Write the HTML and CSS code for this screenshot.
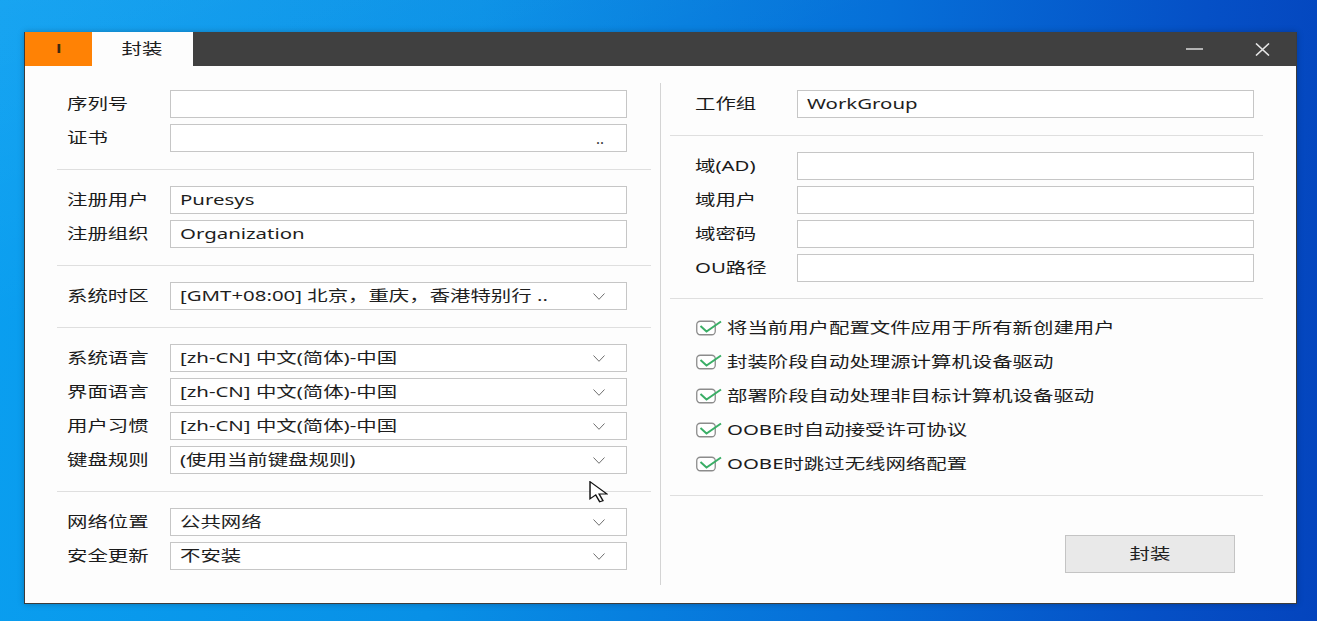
FILE: index.html
```html
<!DOCTYPE html>
<html lang="zh-CN">
<head>
<meta charset="utf-8">
<title>封装</title>
<link rel="stylesheet" href="styles.css">
</head>
<body>
<div class="desk">
  <div class="win">
    <div class="titlebar">
      <div class="tab tab-app"><span class="t tc app-mark">I</span></div>
      <div class="tab tab-active"><span class="t tc">封装</span></div>
      <div class="tb-fill"></div>
      <div class="ctl"><svg width="17" height="4" viewBox="0 0 17 4"><line x1="0" y1="2" x2="17" y2="2" stroke="#e6e6e6" stroke-width="1.4"/></svg></div>
      <div class="ctl"><svg width="15" height="13" viewBox="0 0 15 13"><path d="M1 0.5 L14 12.5 M14 0.5 L1 12.5" stroke="#e6e6e6" stroke-width="1.6" fill="none"/></svg></div>
    </div>
    <div class="content">
      <div class="col col-left">
        <div class="sec sec-first">
          <div class="row"><span class="lbl"><span class="t">序列号</span></span><div class="field"></div></div>
          <div class="row"><span class="lbl"><span class="t">证书</span></span><div class="field field-browse"><span class="dots">..</span></div></div>
        </div>
        <div class="sec">
          <div class="row"><span class="lbl"><span class="t">注册用户</span></span><div class="field"><span class="t">Puresys</span></div></div>
          <div class="row"><span class="lbl"><span class="t">注册组织</span></span><div class="field"><span class="t">Organization</span></div></div>
        </div>
        <div class="sec">
          <div class="row"><span class="lbl"><span class="t">系统时区</span></span><div class="field select"><span class="t">[GMT+08:00] 北京，重庆，香港特别行 ..</span><svg class="chev" width="12" height="7" viewBox="0 0 12 7"><path d="M0.5 0.5 L6 6.3 L11.5 0.5" fill="none" stroke="#6e6e6e" stroke-width="1"/></svg></div></div>
        </div>
        <div class="sec">
          <div class="row"><span class="lbl"><span class="t">系统语言</span></span><div class="field select"><span class="t">[zh-CN] 中文(简体)-中国</span><svg class="chev" width="12" height="7" viewBox="0 0 12 7"><path d="M0.5 0.5 L6 6.3 L11.5 0.5" fill="none" stroke="#6e6e6e" stroke-width="1"/></svg></div></div>
          <div class="row"><span class="lbl"><span class="t">界面语言</span></span><div class="field select"><span class="t">[zh-CN] 中文(简体)-中国</span><svg class="chev" width="12" height="7" viewBox="0 0 12 7"><path d="M0.5 0.5 L6 6.3 L11.5 0.5" fill="none" stroke="#6e6e6e" stroke-width="1"/></svg></div></div>
          <div class="row"><span class="lbl"><span class="t">用户习惯</span></span><div class="field select"><span class="t">[zh-CN] 中文(简体)-中国</span><svg class="chev" width="12" height="7" viewBox="0 0 12 7"><path d="M0.5 0.5 L6 6.3 L11.5 0.5" fill="none" stroke="#6e6e6e" stroke-width="1"/></svg></div></div>
          <div class="row"><span class="lbl"><span class="t">键盘规则</span></span><div class="field select"><span class="t">(使用当前键盘规则)</span><svg class="chev" width="12" height="7" viewBox="0 0 12 7"><path d="M0.5 0.5 L6 6.3 L11.5 0.5" fill="none" stroke="#6e6e6e" stroke-width="1"/></svg></div></div>
        </div>
        <div class="sec sec-last">
          <div class="row"><span class="lbl"><span class="t">网络位置</span></span><div class="field select"><span class="t">公共网络</span><svg class="chev" width="12" height="7" viewBox="0 0 12 7"><path d="M0.5 0.5 L6 6.3 L11.5 0.5" fill="none" stroke="#6e6e6e" stroke-width="1"/></svg></div></div>
          <div class="row"><span class="lbl"><span class="t">安全更新</span></span><div class="field select"><span class="t">不安装</span><svg class="chev" width="12" height="7" viewBox="0 0 12 7"><path d="M0.5 0.5 L6 6.3 L11.5 0.5" fill="none" stroke="#6e6e6e" stroke-width="1"/></svg></div></div>
        </div>
      </div>
      <div class="vdiv"></div>
      <div class="col col-right">
        <div class="sec sec-first">
          <div class="row"><span class="lbl"><span class="t">工作组</span></span><div class="field"><span class="t">WorkGroup</span></div></div>
        </div>
        <div class="sec sec-domain">
          <div class="row"><span class="lbl"><span class="t">域(AD)</span></span><div class="field"></div></div>
          <div class="row"><span class="lbl"><span class="t">域用户</span></span><div class="field"></div></div>
          <div class="row"><span class="lbl"><span class="t">域密码</span></span><div class="field"></div></div>
          <div class="row"><span class="lbl"><span class="t">OU路径</span></span><div class="field"></div></div>
        </div>
        <div class="sec sec-checks">
          <div class="check"><svg width="26" height="16" viewBox="0 0 26 16"><rect x="0.75" y="1.25" width="18.5" height="13.5" rx="3.5" fill="#fff" stroke="#8c8c8c" stroke-width="1.3"/><polyline points="4.5,6 10.5,11.5 25,1.5" fill="none" stroke="#3aae66" stroke-width="2"/></svg><span class="t">将当前用户配置文件应用于所有新创建用户</span></div>
          <div class="check"><svg width="26" height="16" viewBox="0 0 26 16"><rect x="0.75" y="1.25" width="18.5" height="13.5" rx="3.5" fill="#fff" stroke="#8c8c8c" stroke-width="1.3"/><polyline points="4.5,6 10.5,11.5 25,1.5" fill="none" stroke="#3aae66" stroke-width="2"/></svg><span class="t">封装阶段自动处理源计算机设备驱动</span></div>
          <div class="check"><svg width="26" height="16" viewBox="0 0 26 16"><rect x="0.75" y="1.25" width="18.5" height="13.5" rx="3.5" fill="#fff" stroke="#8c8c8c" stroke-width="1.3"/><polyline points="4.5,6 10.5,11.5 25,1.5" fill="none" stroke="#3aae66" stroke-width="2"/></svg><span class="t">部署阶段自动处理非目标计算机设备驱动</span></div>
          <div class="check"><svg width="26" height="16" viewBox="0 0 26 16"><rect x="0.75" y="1.25" width="18.5" height="13.5" rx="3.5" fill="#fff" stroke="#8c8c8c" stroke-width="1.3"/><polyline points="4.5,6 10.5,11.5 25,1.5" fill="none" stroke="#3aae66" stroke-width="2"/></svg><span class="t">OOBE时自动接受许可协议</span></div>
          <div class="check"><svg width="26" height="16" viewBox="0 0 26 16"><rect x="0.75" y="1.25" width="18.5" height="13.5" rx="3.5" fill="#fff" stroke="#8c8c8c" stroke-width="1.3"/><polyline points="4.5,6 10.5,11.5 25,1.5" fill="none" stroke="#3aae66" stroke-width="2"/></svg><span class="t">OOBE时跳过无线网络配置</span></div>
        </div>
        <div class="sec sec-action">
          <button class="btn" type="button"><span class="t tc">封装</span></button>
        </div>
      </div>
    </div>
  </div>
  <svg class="cursor" width="19" height="22" viewBox="0 0 13 21" preserveAspectRatio="none"><path d="M0.7 0.7 L0.7 17 L4.6 13.3 L7.3 19.8 L9.6 18.8 L6.9 12.4 L12.2 12.4 Z" fill="#fff" stroke="#111" stroke-width="1" stroke-linejoin="miter"/></svg>
</div>
</body>
</html>
```

FILE: styles.css
```css
* { box-sizing: border-box; }

html, body {
  margin: 0;
  padding: 0;
}

body {
  width: 1317px;
  height: 621px;
  overflow: hidden;
  font-family: "Noto Sans", "Noto Sans CJK SC", sans-serif;
  font-size: 15px;
  line-height: 20px;
  color: #1c1c1c;
}

.desk {
  position: relative;
  width: 1317px;
  height: 621px;
  padding: 32px 0 0 24px;
  background:
    linear-gradient(160deg, rgba(255,255,255,0.06) 0%, rgba(255,255,255,0) 30%),
    linear-gradient(95deg, #0a9ff0 0%, #0890e6 35%, #066fd8 65%, #0550c6 88%, #0444bd 100%);
}

.t {
  display: inline-block;
  white-space: nowrap;
  transform: translateY(-1px) scaleX(1.36);
  transform-origin: 0 50%;
}

.tc { transform-origin: 50% 50%; }

/* window */
.win {
  width: 1273px;
  height: 572px;
  background: #fdfdfd;
  border: 1px solid #3c3c3c;
  border-top: 0;
  display: flex;
  flex-direction: column;
  box-shadow: 0 0 6px rgba(0, 0, 0, 0.25);
}

.titlebar {
  height: 34px;
  background: #404040;
  display: flex;
  align-items: stretch;
  flex-shrink: 0;
}

.tab {
  display: flex;
  align-items: center;
  justify-content: center;
  color: #222;
}

.tab-app {
  width: 67px;
  background: #ff8205;
}

.app-mark {
  font-family: "Liberation Sans", sans-serif;
  font-weight: bold;
  font-size: 13px;
  color: #3d2a10;
  transform: scaleX(1.4);
}

.tab-active {
  width: 101px;
  background: #fdfdfd;
  color: #202020;
}

.tb-fill { flex: 1; }

.ctl {
  width: 68px;
  display: flex;
  align-items: center;
  justify-content: center;
}

.ctl svg { display: block; }

/* content */
.content {
  flex: 1;
  display: flex;
  padding: 0 33px 0 32px;
}

.col-left { width: 594px; }

.vdiv {
  width: 1px;
  margin: 17px 9px 18px 9px;
  background: #d4d4d4;
}

.col-right { width: 593px; }

.sec {
  display: flex;
  flex-direction: column;
  gap: 6px;
  padding: 16px 0 17px 0;
  border-top: 1px solid #dfdfdf;
}

.sec-first {
  padding-top: 24px;
  border-top: 0;
}

.sec-last { padding-bottom: 0; }

.col-left .row { padding-left: 10px; }
.col-right .row { padding-left: 25px; }

.row {
  display: flex;
  align-items: center;
  height: 28px;
}

.col-left .lbl { width: 103px; }
.col-right .lbl { width: 102px; }

.lbl {
  flex-shrink: 0;
  color: #1a1a1a;
}

.field {
  width: 457px;
  height: 28px;
  border: 1px solid #c6c6c6;
  background: #fff;
  display: flex;
  align-items: center;
  padding: 0 21px 0 9px;
  color: #1e1e1e;
  overflow: hidden;
}

.select { justify-content: space-between; }

.field-browse { justify-content: flex-end; padding-right: 22px; }

.dots {
  font-size: 15px;
  letter-spacing: 0;
  color: #333;
}

.chev { display: block; flex-shrink: 0; }

.sec-domain { padding-bottom: 16px; }

.sec-checks {
  padding-top: 15px;
  padding-left: 26px;
}

.check {
  height: 28px;
  display: flex;
  align-items: center;
  gap: 5px;
  color: #1c1c1c;
}

.check svg { display: block; flex-shrink: 0; }

.sec-action {
  padding: 39px 28px 0 0;
  align-items: flex-end;
}

.btn {
  width: 170px;
  height: 38px;
  background: #e9e9e9;
  border: 1px solid #c4c4c4;
  border-radius: 0;
  font: inherit;
  color: #202020;
  display: flex;
  align-items: center;
  justify-content: center;
  padding: 0;
}

.cursor {
  position: absolute;
  left: 589px;
  top: 481px;
}
```
